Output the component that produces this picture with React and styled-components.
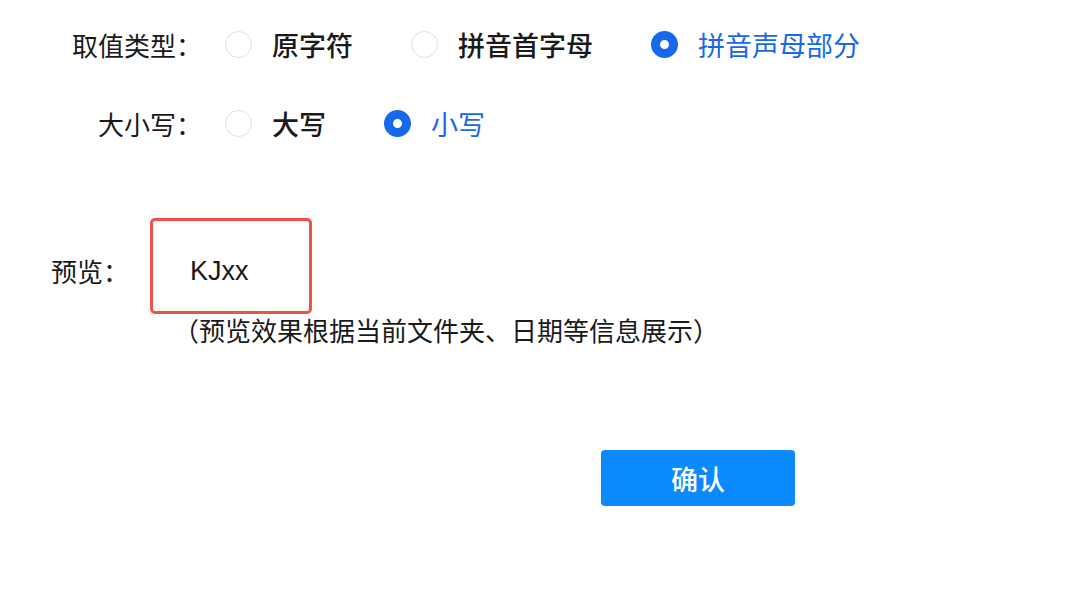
import React, { useState } from 'react';
import styled, { createGlobalStyle } from 'styled-components';

const GlobalStyle = createGlobalStyle`
  body {
    margin: 0;
    background: #fff;
    font-family: "Liberation Sans", "Noto Sans CJK SC", sans-serif;
    color: #1a1a1a;
  }
`;

const Page = styled.div`
  display: flex;
  flex-direction: column;
  padding-top: 24px;
  width: 1068px;
  height: 595px;
  box-sizing: border-box;
`;

const Row = styled.div`
  display: flex;
  align-items: center;
  height: 40px;
  margin-bottom: ${p => p.gap || 0}px;
`;

const Label = styled.div`
  width: 202px;
  text-align: right;
  font-size: 26px;
  flex-shrink: 0;
  margin-right: 23px;
`;

const Option = styled.label`
  display: flex;
  align-items: center;
  gap: 20px;
  margin-right: 58px;
  cursor: pointer;
  font-size: 27px;
  font-weight: ${p => (p.checked ? 400 : 500)};
  color: ${p => (p.checked ? '#1769ea' : '#1a1a1a')};
`;

const Circle = styled.span`
  width: 27px;
  height: 27px;
  box-sizing: border-box;
  border-radius: 50%;
  border: ${p => (p.checked ? '9px solid #1769ea' : '1px solid #dcdfe6')};
  background: #fff;
  flex-shrink: 0;
`;

const PreviewRow = styled.div`
  display: flex;
  align-items: center;
  margin-top: 75px;
`;

const PreviewLabel = styled.div`
  width: 99px;
  padding-left: 51px;
  font-size: 26px;
  padding-top: 8px;
  flex-shrink: 0;
`;

const PreviewBox = styled.div`
  width: 162px;
  height: 96px;
  box-sizing: border-box;
  border: 3px solid #f0524a;
  border-radius: 5px;
  display: flex;
  align-items: center;
  padding-left: 37px;
  padding-top: 10px;
  font-size: 27px;
`;

const Hint = styled.div`
  margin-left: 173px;
  margin-top: -3px;
  font-size: 26px;
  font-family: "Noto Sans CJK SC", sans-serif;
`;

const Footer = styled.div`
  display: flex;
  margin-top: 102px;
  padding-left: 601px;
`;

const Button = styled.button`
  width: 194px;
  height: 56px;
  border: none;
  border-radius: 4px;
  background: #0a8afc;
  color: #fff;
  font-size: 27px;
  font-weight: 500;
  font-family: "Noto Sans CJK SC", sans-serif;
  cursor: pointer;
`;

const RadioGroup = ({ options, value, onChange }) => (
  <>
    {options.map(o => (
      <Option key={o} checked={o === value} onClick={() => onChange(o)}>
        <Circle checked={o === value} />
        {o}
      </Option>
    ))}
  </>
);

const App = () => {
  const [type, setType] = useState('拼音声母部分');
  const [cased, setCased] = useState('小写');

  return (
    <Page>
      <GlobalStyle />
      <Row gap={39}>
        <Label>取值类型：</Label>
        <RadioGroup options={['原字符', '拼音首字母', '拼音声母部分']} value={type} onChange={setType} />
      </Row>
      <Row>
        <Label>大小写：</Label>
        <RadioGroup options={['大写', '小写']} value={cased} onChange={setCased} />
      </Row>
      <PreviewRow>
        <PreviewLabel>预览：</PreviewLabel>
        <PreviewBox>KJxx</PreviewBox>
      </PreviewRow>
      <Hint>（预览效果根据当前文件夹、日期等信息展示）</Hint>
      <Footer>
        <Button>确认</Button>
      </Footer>
    </Page>
  );
};

export default App;
